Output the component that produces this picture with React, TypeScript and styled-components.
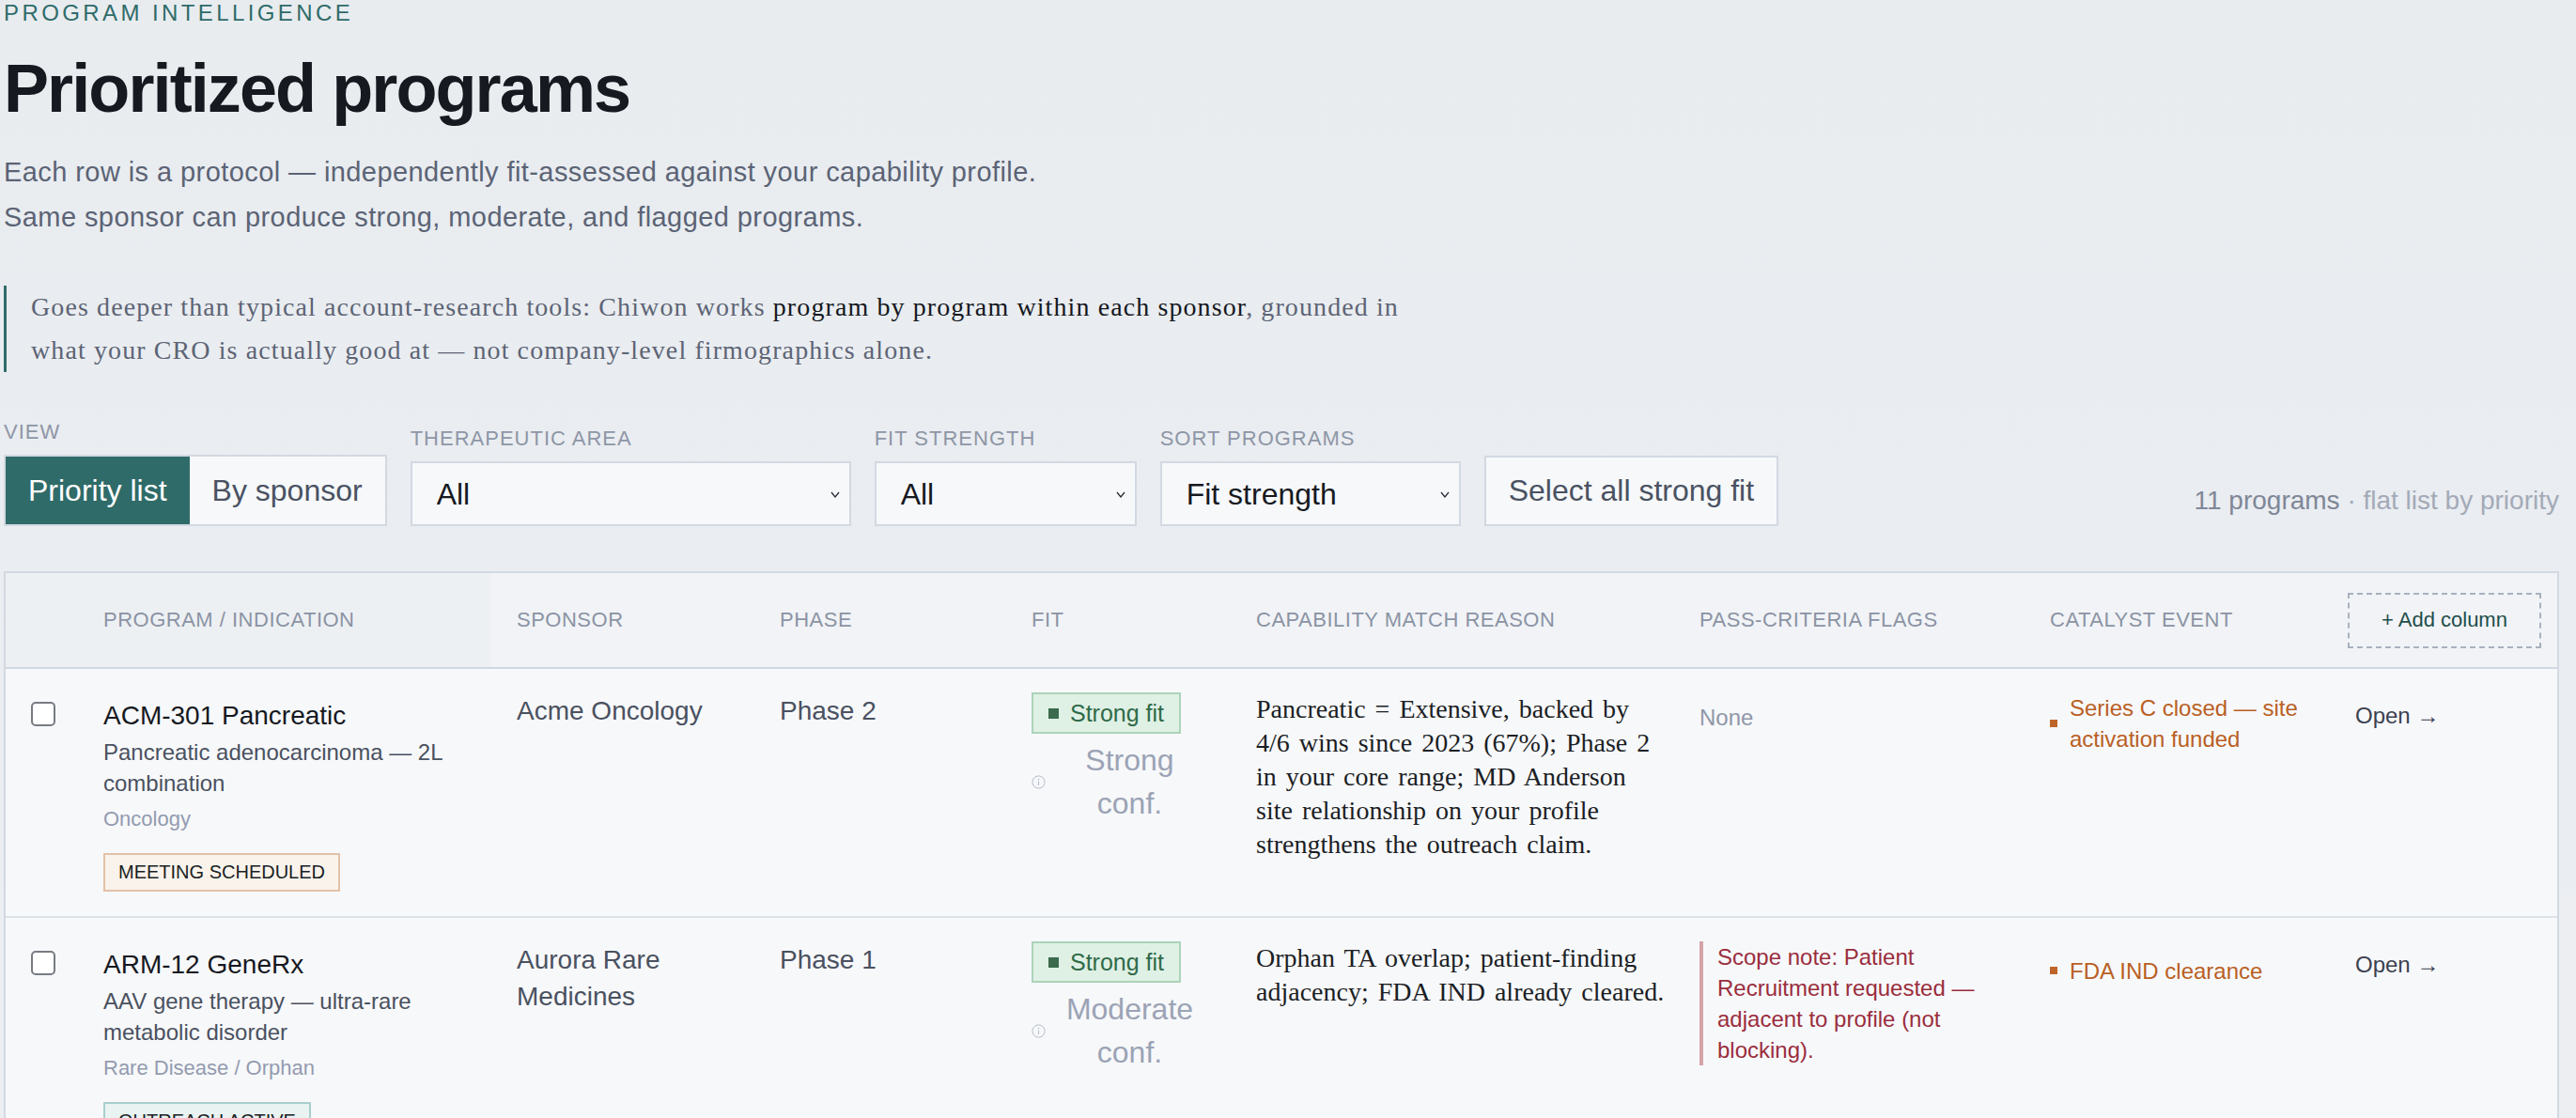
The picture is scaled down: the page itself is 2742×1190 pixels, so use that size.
import React from "react";
import styled, { createGlobalStyle } from "styled-components";

type Tone = "meeting" | "outreach";

type ProgramRow = {
    id: string;
    name: string;
    indication: string;
    area: string;
    status: string;
    statusTone: Tone;
    sponsor: string;
    phase: string;
    fit: string;
    confidence: string;
    reason: string;
    flag?: string;
    catalyst: string;
};

const programs: ProgramRow[] = [
    {
        id: "acm-301",
        name: "ACM-301 Pancreatic",
        indication: "Pancreatic adenocarcinoma \u2014 2L combination",
        area: "Oncology",
        status: "Meeting scheduled",
        statusTone: "meeting",
        sponsor: "Acme Oncology",
        phase: "Phase 2",
        fit: "Strong fit",
        confidence: "Strong conf.",
        reason:
            "Pancreatic = Extensive, backed by 4/6 wins since 2023 (67%); Phase 2 in your core range; MD Anderson site relationship on your profile strengthens the outreach claim.",
        catalyst: "Series C closed \u2014 site activation funded",
    },
    {
        id: "arm-12",
        name: "ARM-12 GeneRx",
        indication: "AAV gene therapy \u2014 ultra-rare metabolic disorder",
        area: "Rare Disease / Orphan",
        status: "Outreach active",
        statusTone: "outreach",
        sponsor: "Aurora Rare Medicines",
        phase: "Phase 1",
        fit: "Strong fit",
        confidence: "Moderate conf.",
        reason: "Orphan TA overlap; patient-finding adjacency; FDA IND already cleared.",
        flag: "Scope note: Patient Recruitment requested \u2014 adjacent to profile (not blocking).",
        catalyst: "FDA IND clearance",
    },
];

const GlobalStyle = createGlobalStyle`
  * { box-sizing: border-box; }
  body {
    margin: 0;
    background: linear-gradient(180deg, #e8ecef 0%, #eaedf1 45%, #eceef2 100%);
    font-family: "Liberation Sans", Arial, sans-serif;
    color: #16191f;
  }
`;

const Page = styled.main`
  padding: 2px 18px 60px 4px;
  min-height: 100vh;
`;

const Eyebrow = styled.div`
  font-size: 24px;
  line-height: 24px;
  letter-spacing: 3.4px;
  text-transform: uppercase;
  color: #2f6b69;
`;

const Title = styled.h1`
  margin: 29px 0 0;
  font-size: 72px;
  line-height: 1.1;
  font-weight: 700;
  letter-spacing: -1.9px;
  color: #16191f;
`;

const Lead = styled.p`
  margin: 25px 0 0;
  font-size: 29px;
  line-height: 48px;
  letter-spacing: 0.42px;
  color: #5b6375;
`;

const Callout = styled.blockquote`
  margin: 49px 0 0;
  max-width: 1510px;
  padding-left: 26px;
  border-left: 3px solid #2f6b69;
  font-family: "Liberation Serif", "Times New Roman", serif;
  font-size: 28px;
  line-height: 46px;
  letter-spacing: 1.1px;
  color: #5d6475;

  strong {
    font-weight: 400;
    color: #15181e;
  }
`;

const Controls = styled.div`
  display: flex;
  align-items: flex-end;
  gap: 25px;
  margin-top: 51px;
`;

const Field = styled.label`
  display: flex;
  flex-direction: column;
  gap: 11px;
`;

const FieldLabel = styled.span`
  font-size: 22px;
  line-height: 26px;
  letter-spacing: 1px;
  text-transform: uppercase;
  color: #8e96a6;
`;

const Segmented = styled.div`
  display: flex;
  height: 76px;
  border: 2px solid #d3d9e2;
`;

const SegButton = styled.button<{ $active?: boolean }>`
  padding: 0 24px;
  border: none;
  font-family: inherit;
  font-size: 32px;
  cursor: pointer;
  background: ${p => (p.$active ? "#2f6b69" : "#f6f8fa")};
  color: ${p => (p.$active ? "#ffffff" : "#4a5262")};
`;

const SelectWrap = styled.div<{ $width: number }>`
  position: relative;
  width: ${p => p.$width}px;
`;

const Select = styled.select`
  width: 100%;
  height: 69px;
  padding: 0 40px 0 26px;
  appearance: none;
  border: 2px solid #d3d9e2;
  border-radius: 0;
  background: #f6f8fa;
  font-family: inherit;
  font-size: 32px;
  color: #16191f;
`;

const Chevron = styled.svg`
  position: absolute;
  right: 12px;
  top: 50%;
  margin-top: -3px;
  pointer-events: none;
`;

const GhostButton = styled.button`
  height: 75px;
  padding: 0 24px;
  border: 2px solid #d3d9e2;
  background: #f6f8fa;
  font-family: inherit;
  font-size: 32px;
  color: #4a5262;
  cursor: pointer;
`;

const Count = styled.div`
  margin-left: auto;
  margin-bottom: 9px;
  font-size: 28px;
  line-height: 36px;
  color: #a3aab8;

  b {
    font-weight: 400;
    color: #7f8797;
  }
`;

const columns = "76px 440px 280px 268px 239px 472px 373px 325px 1fr";

const Table = styled.section`
  margin-top: 48px;
  border: 2px solid #d3d9e2;
  background: #f7f8fa;
`;

const HeadRow = styled.div`
  display: grid;
  grid-template-columns: ${columns};
  min-height: 102px;
  background: #f1f3f6;
  border-bottom: 2px solid #d0d7e0;
`;

const HeadCell = styled.div<{ $pinned?: boolean; $end?: boolean }>`
  display: flex;
  align-items: center;
  padding: ${p => (p.$end ? "0 14px 0 20px" : "0 28px")};
  font-size: 22px;
  letter-spacing: 0.5px;
  text-transform: uppercase;
  color: #8b93a4;
  background: ${p => (p.$pinned ? "#edf0f3" : "transparent")};
`;

const AddColumn = styled.button`
  height: 59px;
  padding: 0 34px;
  border: 2px dashed #a9b1bd;
  background: transparent;
  font-family: inherit;
  font-size: 22px;
  white-space: nowrap;
  color: #1f4e4b;
  cursor: pointer;
`;

const Row = styled.div`
  display: grid;
  grid-template-columns: ${columns};
  border-bottom: 2px solid #dde2e8;
`;

const Cell = styled.div<{ $padLeft?: number; $padRight?: number }>`
  padding: 25px ${p => p.$padRight ?? 28}px 26px ${p => p.$padLeft ?? 28}px;
  min-width: 0;
`;

const Checkbox = styled.input`
  appearance: none;
  display: block;
  width: 26px;
  height: 26px;
  margin: 10px 0 0;
  border: 2px solid #777b82;
  border-radius: 5px;
  background: #ffffff;
`;

const Name = styled.div`
  margin-top: 7px;
  font-size: 28px;
  line-height: 36px;
  color: #16191f;
`;

const Indication = styled.div`
  margin-top: 4px;
  font-size: 24px;
  line-height: 33px;
  color: #4a5160;
`;

const Area = styled.div`
  margin-top: 7px;
  font-size: 22px;
  line-height: 30px;
  color: #939bb0;
`;

const StatusTag = styled.span<{ $tone: Tone }>`
  display: inline-block;
  margin-top: 21px;
  height: 41px;
  padding: 0 14px;
  border: 2px solid ${p => (p.$tone === "meeting" ? "#e2c1a8" : "#a8cfcc")};
  background: ${p => (p.$tone === "meeting" ? "#f9f3ec" : "#e8f3f2")};
  font-size: 20px;
  line-height: 37px;
  text-transform: uppercase;
  color: #1b1e24;
`;

const Plain = styled.div`
  font-size: 28px;
  line-height: 39px;
  color: #4a5160;
`;

const FitBadge = styled.span`
  display: inline-flex;
  align-items: center;
  gap: 12px;
  height: 44px;
  padding: 0 16px;
  border: 2px solid #acd3b9;
  background: #dff0e5;
  font-size: 25px;
  color: #2f6b49;

  &::before {
    content: "";
    width: 11px;
    height: 11px;
    background: #3b6a4d;
  }
`;

const Confidence = styled.div`
  display: flex;
  align-items: center;
  gap: 11px;
  margin-top: 5px;
`;

const ConfText = styled.span`
  flex: 1;
  text-align: center;
  font-size: 32px;
  line-height: 46px;
  color: #9ba3b5;
`;

const Reason = styled.p`
  margin: 0;
  font-family: "Liberation Serif", "Times New Roman", serif;
  font-size: 28px;
  line-height: 36px;
  word-spacing: 3px;
  color: #1b1e24;
`;

const Muted = styled.div`
  margin-top: 10px;
  font-size: 24px;
  line-height: 33px;
  color: #8f97a8;
`;

const ScopeNote = styled.div`
  padding-left: 15px;
  border-left: 4px solid #d3a2a9;
  font-size: 24px;
  line-height: 33px;
  color: #9a2d3d;
`;

const Catalyst = styled.div`
  display: flex;
  align-items: center;
  gap: 13px;
  min-height: 62px;
  font-size: 24px;
  line-height: 33px;
  color: #b95f24;

  &::before {
    content: "";
    flex: none;
    width: 8px;
    height: 8px;
    background: #c0652a;
  }
`;

const OpenLink = styled.a`
  display: inline-block;
  margin-top: 8px;
  font-size: 24px;
  line-height: 33px;
  color: #3b4150;
  text-decoration: none;
`;

function InfoIcon() {
    return (
        <svg width="15" height="15" viewBox="0 0 15 15" style={{ flex: "none" }}>
            <circle cx="7.5" cy="7.5" r="6.6" fill="none" stroke="#b6bcc8" strokeWidth="1" />
            <circle cx="7.5" cy="4.6" r="0.8" fill="#b6bcc8" />
            <line x1="7.5" y1="6.6" x2="7.5" y2="11" stroke="#b6bcc8" strokeWidth="1.1" />
        </svg>
    );
}

function FilterSelect({ label, width, options }: { label: string; width: number; options: string[] }) {
    return (
        <Field>
            <FieldLabel>{label}</FieldLabel>
            <SelectWrap $width={width}>
                <Select defaultValue={options[0]}>
                    {options.map(o => (
                        <option key={o}>{o}</option>
                    ))}
                </Select>
                <Chevron width="10" height="7" viewBox="0 0 10 7">
                    <polyline points="1,1 5,6 9,1" fill="none" stroke="#2b2f36" strokeWidth="1.3" />
                </Chevron>
            </SelectWrap>
        </Field>
    );
}

function ProgramLine({ row }: { row: ProgramRow }) {
    return (
        <Row>
            <Cell $padLeft={27} $padRight={0}>
                <Checkbox type="checkbox" aria-label={row.name} />
            </Cell>
            <Cell>
                <Name>{row.name}</Name>
                <Indication>{row.indication}</Indication>
                <Area>{row.area}</Area>
                <StatusTag $tone={row.statusTone}>{row.status}</StatusTag>
            </Cell>
            <Cell>
                <Plain>{row.sponsor}</Plain>
            </Cell>
            <Cell>
                <Plain>{row.phase}</Plain>
            </Cell>
            <Cell>
                <FitBadge>{row.fit}</FitBadge>
                <Confidence>
                    <InfoIcon />
                    <ConfText>{row.confidence}</ConfText>
                </Confidence>
            </Cell>
            <Cell $padRight={8}>
                <Reason>{row.reason}</Reason>
            </Cell>
            <Cell>{row.flag ? <ScopeNote>{row.flag}</ScopeNote> : <Muted>None</Muted>}</Cell>
            <Cell $padRight={20}>
                <Catalyst>{row.catalyst}</Catalyst>
            </Cell>
            <Cell>
                <OpenLink href="#">Open →</OpenLink>
            </Cell>
        </Row>
    );
}

export default function App() {
    return (
        <>
            <GlobalStyle />
            <Page>
                <Eyebrow>Program intelligence</Eyebrow>
                <Title>Prioritized programs</Title>
                <Lead>
                    Each row is a protocol — independently fit-assessed against your capability profile.
                    <br />
                    Same sponsor can produce strong, moderate, and flagged programs.
                </Lead>
                <Callout>
                    Goes deeper than typical account-research tools: Chiwon works{" "}
                    <strong>program by program within each sponsor</strong>, grounded in what your CRO is
                    actually good at — not company-level firmographics alone.
                </Callout>

                <Controls>
                    <Field as="div">
                        <FieldLabel>View</FieldLabel>
                        <Segmented>
                            <SegButton $active>Priority list</SegButton>
                            <SegButton>By sponsor</SegButton>
                        </Segmented>
                    </Field>
                    <FilterSelect
                        label="Therapeutic area"
                        width={469}
                        options={["All", "Oncology", "Rare Disease / Orphan", "CNS", "Immunology"]}
                    />
                    <FilterSelect label="Fit strength" width={279} options={["All", "Strong", "Moderate", "Flagged"]} />
                    <FilterSelect
                        label="Sort programs"
                        width={320}
                        options={["Fit strength", "Catalyst date", "Sponsor"]}
                    />
                    <GhostButton>Select all strong fit</GhostButton>
                    <Count>
                        <b>11 programs</b> · flat list by priority
                    </Count>
                </Controls>

                <Table>
                    <HeadRow>
                        <HeadCell $pinned />
                        <HeadCell $pinned>Program / Indication</HeadCell>
                        <HeadCell>Sponsor</HeadCell>
                        <HeadCell>Phase</HeadCell>
                        <HeadCell>Fit</HeadCell>
                        <HeadCell>Capability match reason</HeadCell>
                        <HeadCell>Pass-criteria flags</HeadCell>
                        <HeadCell>Catalyst event</HeadCell>
                        <HeadCell $end>
                            <AddColumn>+ Add column</AddColumn>
                        </HeadCell>
                    </HeadRow>
                    {programs.map(row => (
                        <ProgramLine key={row.id} row={row} />
                    ))}
                </Table>
            </Page>
        </>
    );
}
